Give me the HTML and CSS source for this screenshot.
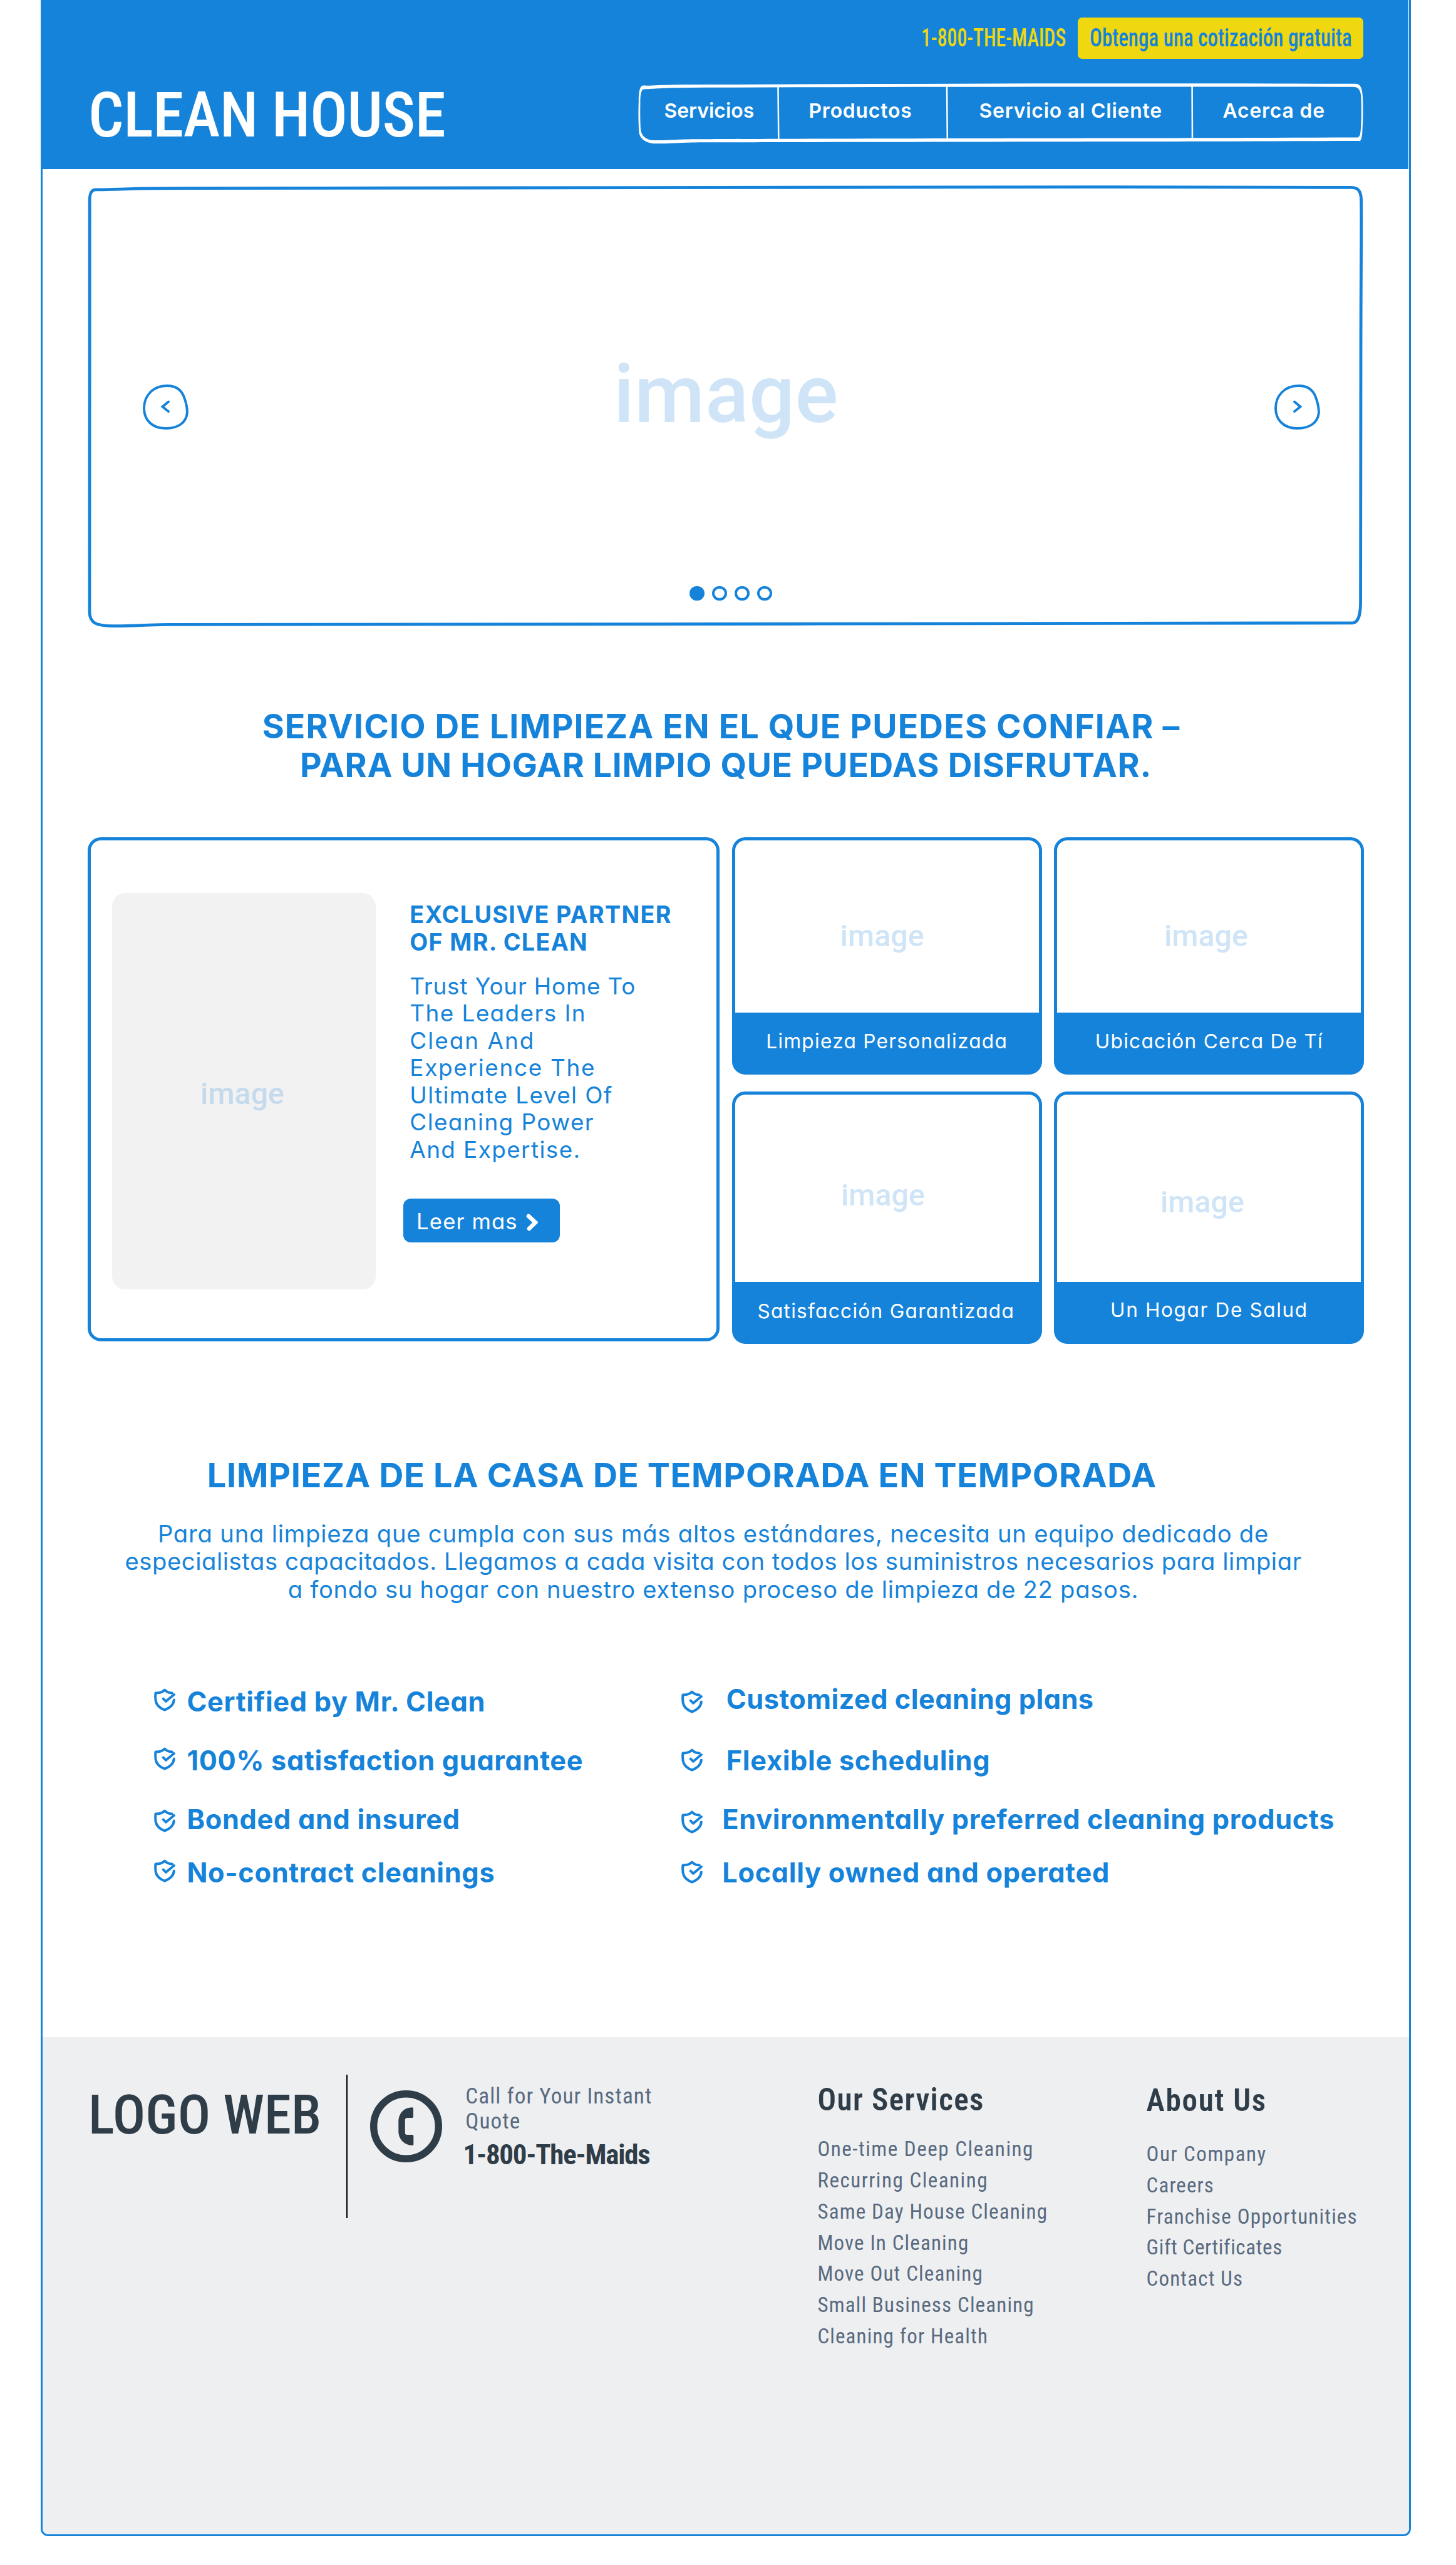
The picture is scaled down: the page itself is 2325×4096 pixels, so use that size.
FILE: index.html
```html
<!DOCTYPE html>
<html lang="es">
<head>
<meta charset="utf-8">
<title>Clean House</title>
<link rel="stylesheet" href="styles.css">
</head>
<body>
<svg class="defs" aria-hidden="true">
  <symbol id="shield" viewBox="0 0 34 37">
    <path d="M28.8 7.4C23 7.6 20 5.8 17 2.6C14 5.8 9 7.6 2.5 7.4C1.2 20 2.4 29 17 34.6C27 30.5 31.4 25 31.8 18.6"/>
    <path d="M14.8 16.6l4.2 4.2L31.9 10"/>
  </symbol>
</svg>
<div class="page">
  <header class="header">
    <h1 class="logo">CLEAN HOUSE</h1>
    <div class="header-side">
      <div class="contact">
        <span class="phone">1-800-THE-MAIDS</span>
        <a class="quote"><span class="quote-text">Obtenga una cotización gratuita</span></a>
      </div>
      <nav class="nav">
        <svg class="nav-frame" viewBox="0 0 1158 97">
          <path fill-rule="evenodd" d="M.8 30C.8 12 3 3.8 8 3.6C24 4 34 2.6 60 2.2C400 .6 800-.2 1146 .8C1153 .8 1156.5 8 1157 22C1158 45 1157.4 60 1156.6 72C1156.4 84 1155 92 1152 92C800 93.2 300 93.8 90 94.4C60 94.8 50 96.6 28 96.2C14 96.2 2 90 1.2 76C.4 60 .2 46 .8 30ZM3.4 32C3.2 20 4.6 9.6 9 9.4C24 9 34 7.6 60 7.2C400 5.4 800 5.2 1140 5.8C1150 5 1153.6 10 1154.4 22C1155.4 45 1154.8 60 1153.8 74C1153.4 82 1152 87 1147 86.6C800 87.6 300 88.4 90 89.2C60 89.6 50 91 28 91C12 91.4 4 84 3.8 70C3.2 56 3.2 44 3.4 32Z"/>
          <path class="divider" d="M223.5 6l.8 84M493 5l.8 84M884.6 4l.4 84"/>
        </svg>
        <a class="nav-item">Servicios</a>
        <a class="nav-item">Productos</a>
        <a class="nav-item">Servicio al Cliente</a>
        <a class="nav-item">Acerca de</a>
      </nav>
    </div>
  </header>

  <section class="hero">
    <svg class="hero-frame" viewBox="0 0 2037 706">
      <path d="M3.2 25C3 12 6 7.5 12 6.8C40 7.2 60 5 110 4.8C700 3 1300 2.4 1600 2.6C1800 2.4 1900 3.4 2016 3.4C2028 3 2033 8 2033.6 22C2034.6 60 2033 120 2033 300L2032.6 660C2033 684 2030 698 2020 698.8C1500 700 500 701 130 701.4C80 702 70 704 40 703.6C12 703.4 3.6 698 3 682C2.4 560 3 300 3.2 25Z"/>
    </svg>
    <div class="slide">
      <svg class="arrow" viewBox="0 0 73 72"><path d="M39 2C53 2 61 8 65.5 19C69 28 71.3 37 70.8 46C69 62 55 70 37 70C14 70 2 56 2 38C2 18 16 2 39 2Z"/><path d="M41 27.5L31.5 35.5L41 43"/></svg>
      <span class="placeholder placeholder-big">image</span>
      <svg class="arrow arrow-next" viewBox="0 0 73 72"><path d="M39 2C53 2 61 8 65.5 19C69 28 71.3 37 70.8 46C69 62 55 70 37 70C14 70 2 56 2 38C2 18 16 2 39 2Z"/><path d="M32 27.5L41.5 35.5L32 43"/></svg>
    </div>
    <div class="dots"><i class="dot dot-on"></i><i class="dot"></i><i class="dot"></i><i class="dot"></i></div>
  </section>

  <h2 class="headline">
    <span class="headline-first">SERVICIO DE LIMPIEZA EN EL QUE PUEDES CONFIAR –</span>
    <span>PARA UN HOGAR LIMPIO QUE PUEDAS DISFRUTAR.</span>
  </h2>

  <section class="services">
    <article class="partner">
      <div class="partner-pic"><span class="placeholder">image</span></div>
      <div class="partner-body">
        <h3 class="partner-title">EXCLUSIVE PARTNER<br>OF MR. CLEAN</h3>
        <p class="partner-text">
          <span class="tight">Trust Your Home To</span>
          <span>The Leaders In</span>
          <span class="wide">Clean And</span>
          <span class="medium">Experience The</span>
          <span>Ultimate Level Of</span>
          <span>Cleaning Power</span>
          <span>And Expertise.</span>
        </p>
        <a class="more">Leer mas
          <svg class="more-icon" viewBox="0 0 19 28"><path d="M4 4L15 14L5 24"/></svg>
        </a>
      </div>
    </article>
    <div class="cards">
      <article class="card"><div class="card-pic"><span class="placeholder">image</span></div><p class="card-name">Limpieza Personalizada</p></article>
      <article class="card"><div class="card-pic"><span class="placeholder">image</span></div><p class="card-name">Ubicación Cerca De Tí</p></article>
      <article class="card"><div class="card-pic"><span class="placeholder">image</span></div><p class="card-name">Satisfacción Garantizada</p></article>
      <article class="card"><div class="card-pic"><span class="placeholder">image</span></div><p class="card-name">Un Hogar De Salud</p></article>
    </div>
  </section>

  <section class="seasons">
    <h2 class="seasons-title">LIMPIEZA DE LA CASA DE TEMPORADA EN TEMPORADA</h2>
    <p class="seasons-text">
      <span>Para una limpieza que cumpla con sus más altos estándares, necesita un equipo dedicado de</span>
      <span>especialistas capacitados. Llegamos a cada visita con todos los suministros necesarios para limpiar</span>
      <span>a fondo su hogar con nuestro extenso proceso de limpieza de 22 pasos.</span>
    </p>
    <div class="perks">
      <ul class="perk-list">
        <li class="perk"><svg class="shield"><use href="#shield"/></svg>Certified by Mr. Clean</li>
        <li class="perk"><svg class="shield"><use href="#shield"/></svg>100% satisfaction guarantee</li>
        <li class="perk"><svg class="shield"><use href="#shield"/></svg>Bonded and insured</li>
        <li class="perk"><svg class="shield"><use href="#shield"/></svg>No-contract cleanings</li>
      </ul>
      <ul class="perk-list perk-list-right">
        <li class="perk"><svg class="shield"><use href="#shield"/></svg>Customized cleaning plans</li>
        <li class="perk"><svg class="shield"><use href="#shield"/></svg>Flexible scheduling</li>
        <li class="perk"><svg class="shield"><use href="#shield"/></svg>Environmentally preferred cleaning products</li>
        <li class="perk"><svg class="shield"><use href="#shield"/></svg>Locally owned and operated</li>
      </ul>
    </div>
  </section>

  <footer class="footer">
    <div class="footer-logo">LOGO WEB</div>
    <div class="call">
      <svg class="call-icon" viewBox="0 0 115 115"><circle cx="57.5" cy="57.5" r="51.8"/><path d="M65 27.4Q69 27 69 28.5V42Q69 43.9 67.5 43.9H59Q55.8 44 55.8 48V68Q55.8 71 59 71H67.5Q69.3 71 69.3 73V86.5Q69.3 88 67 88C53 87 45.5 77 45.3 66V50C45.3 38 53 28 65 27.4Z"/></svg>
      <div class="call-body">
        <p class="call-text">Call for Your Instant<br>Quote</p>
        <p class="call-number">1-800-The-Maids</p>
      </div>
    </div>
    <div class="links links-services">
      <h4 class="links-title">Our Services</h4>
      <ul class="links-list">
        <li>One-time Deep Cleaning</li>
        <li>Recurring Cleaning</li>
        <li>Same Day House Cleaning</li>
        <li>Move In Cleaning</li>
        <li>Move Out Cleaning</li>
        <li>Small Business Cleaning</li>
        <li>Cleaning for Health</li>
      </ul>
    </div>
    <div class="links links-about">
      <h4 class="links-title">About Us</h4>
      <ul class="links-list">
        <li>Our Company</li>
        <li>Careers</li>
        <li>Franchise Opportunities</li>
        <li class="tight-link">Gift Certificates</li>
        <li>Contact Us</li>
      </ul>
    </div>
  </footer>
</div>
</body>
</html>
```
FILE: styles.css
```css
:root {
  --blue: #1683da;
  --yellow: #efd80f;
  --ink: #2f3d49;
  --slate: #596a7f;
  --round: Inter, "Open Sans", sans-serif;
  --din: "Roboto Condensed", Roboto, sans-serif;
}

* { box-sizing: border-box; }

body {
  margin: 0;
  height: 4096px;
  background: #fff;
  color: var(--blue);
  font-family: var(--round);
  font-feature-settings: "cv11", "calt" 0;
}

h1, h2, h3, h4, p, ul { margin: 0; padding: 0; font-size: inherit; }
ul { list-style: none; }
a, span, h1, h4, li { white-space: nowrap; }

.defs { display: none; }

.page {
  width: 2188px;
  height: 4050px;
  margin-left: 65px;
  border: solid var(--blue);
  border-width: 0 3px 3px;
  border-radius: 0 0 12px 12px;
  display: flex;
  flex-direction: column;
}

/* Header */
.header {
  height: 270px;
  margin-right: 1px;
  padding: 0 72.5px 0 73px;
  background: var(--blue);
  color: #fff;
  display: flex;
  justify-content: space-between;
  align-items: flex-start;
  flex: none;
}

.logo {
  margin-top: 134px;
  font: 500 99.6px/100px var(--din);
  letter-spacing: -.5px;
}

.header-side {
  display: flex;
  flex-direction: column;
  align-items: flex-end;
}

.contact {
  margin-top: 27.6px;
  display: flex;
  gap: 20px;
  font: 500 40.2px/66px var(--din);
}

.phone {
  width: 230px;
  color: var(--yellow);
  transform: scaleX(.79);
  transform-origin: left;
}

.quote {
  width: 456px;
  height: 66.4px;
  padding-left: 19px;
  border-radius: 7px;
  background: var(--yellow);
  color: var(--blue);
}

.quote-text {
  display: block;
  transform: scaleX(.822);
  transform-origin: left;
}

.nav {
  position: relative;
  width: 1158px;
  height: 97px;
  margin-top: 39.2px;
  padding-top: 28px;
  display: grid;
  grid-template-columns: 224px 269px 392px 273px;
  font: 600 31.9px/32px var(--round);
  letter-spacing: .8px;
}

.nav-frame {
  position: absolute;
  inset: 0;
  fill: #fff;
}

.divider { stroke: #fff; stroke-width: 2.5; }

.nav-item { padding-left: 49px; }
.nav-item:first-of-type { padding-left: 42px; letter-spacing: 0; }
.nav-item:nth-of-type(3) { padding-left: 52px; }

/* Carousel */
.hero {
  position: relative;
  flex: none;
  width: 2037px;
  height: 706px;
  margin: 25.8px 0 0 72.4px;
  padding: 318px 69px 0 87.3px;
}

.hero-frame {
  position: absolute;
  inset: 0;
  fill: none;
  stroke: var(--blue);
  stroke-width: 4.8;
}

.slide {
  height: 72px;
  display: flex;
  align-items: flex-start;
}

.arrow {
  width: 73px;
  height: 72px;
  fill: none;
  stroke: var(--blue);
  stroke-width: 3.9;
  stroke-linecap: round;
}

.arrow-next { margin-left: auto; }

.placeholder {
  font: 500 48.4px/50px Roboto, sans-serif;
  letter-spacing: 0;
  opacity: .2;
}

.placeholder-big {
  font-size: 129px;
  line-height: 130px;
  letter-spacing: .5px;
  margin: -48.5px 0 0 679px;
}

.dots {
  display: flex;
  gap: 12.4px;
  margin: 250px 0 0 873.3px;
}

.dot {
  width: 23.6px;
  height: 23.6px;
  border: 4.5px solid var(--blue);
  border-radius: 50%;
}

.dot-on { background: var(--blue); }

/* Headline */
.headline {
  flex: none;
  margin-top: 127px;
  font-weight: 700;
  font-size: 53.6px;
  line-height: 62.2px;
  letter-spacing: .65px;
  text-align: center;
}

.headline span { display: block; }
.headline .headline-first { padding-right: 15px; letter-spacing: 1.15px; }

/* Services */
.services {
  flex: none;
  margin: 83.5px 0 0 71.8px;
  display: flex;
  gap: 19.7px;
}

.partner {
  width: 1009.3px;
  height: 805.7px;
  border: 5px solid var(--blue);
  border-radius: 21px;
  padding: 84.1px 0 0 34.7px;
  display: flex;
}

.partner-pic {
  width: 420.5px;
  height: 633.4px;
  border-radius: 21px;
  background: #f2f2f2;
  display: flex;
  padding: 296px 0 0 140.6px;
}

.partner-body { margin: 13.3px 0 0 54.3px; }

.partner-title {
  font-weight: 700;
  font-size: 37.7px;
  line-height: 43.6px;
  letter-spacing: 1.3px;
}

.partner-text {
  margin-top: 26.3px;
  font-size: 36.9px;
  line-height: 43.55px;
  letter-spacing: 1.4px;
}

.partner-text span { display: block; }
.partner-text .tight { letter-spacing: .8px; }
.partner-text .medium { letter-spacing: 1.7px; }
.partner-text .wide { letter-spacing: 2px; }

.more {
  width: 250px;
  height: 70.5px;
  margin: 56.5px 0 0 -10.2px;
  padding: 2px 35px 0 21px;
  border-radius: 12px;
  background: var(--blue);
  color: #fff;
  font-size: 34.7px;
  letter-spacing: 1.1px;
  display: flex;
  align-items: center;
  justify-content: space-between;
}

.more-icon {
  width: 19px;
  height: 28px;
  margin-top: 4px;
  fill: none;
  stroke: #fff;
  stroke-width: 6.6;
  stroke-linecap: round;
}

.cards {
  display: grid;
  grid-template-columns: 494.9px 494.9px;
  grid-template-rows: 379.1px 403.1px;
  gap: 26.8px 19.8px;
}

.card {
  border: 5px solid var(--blue);
  border-radius: 21px;
  background: var(--blue);
  display: flex;
  flex-direction: column;
}

.card-pic {
  flex: 1;
  border-radius: 16px 16px 0 0;
  background: #fff;
  padding: 127.9px 0 0 168px;
}

.card-pic .placeholder { display: block; }
.card:nth-child(2) .card-pic { padding-left: 170.5px; }
.card:nth-child(3) .card-pic { padding: 136.7px 0 0 169.2px; }
.card:nth-child(4) .card-pic { padding: 147.1px 0 0 164.5px; }

.card-name {
  height: 94px;
  padding-top: 29.8px;
  color: #fff;
  font-size: 31.6px;
  line-height: 32px;
  letter-spacing: 1.28px;
  text-align: center;
}

.card:nth-child(3) .card-name { padding: 31.3px 3px 0 0; }
.card:nth-child(4) .card-name { letter-spacing: 1.6px; }

/* Seasons */
.seasons { flex: none; }

.seasons-title {
  margin: 178.2px 0 0 262.8px;
  font-weight: 700;
  font-size: 54.2px;
  line-height: 62px;
  letter-spacing: .62px;
}

.seasons-text {
  margin: 40.9px 40px 0 0;
  font-size: 38.2px;
  line-height: 44.6px;
  letter-spacing: .57px;
  text-align: center;
}

.seasons-text span { display: block; }
.seasons-text span:first-child { letter-spacing: .79px; }
.seasons-text span:last-child { letter-spacing: .71px; }

.perks {
  margin: 134.6px 0 0 178.4px;
  display: grid;
  grid-template-columns: 841.9px auto;
}

.perk-list {
  display: grid;
  grid-template-rows: 94.3px 93.4px 85.4px 44px;
}

.perk {
  display: flex;
  gap: 18px;
  font-weight: 700;
  font-size: 43.3px;
  line-height: 44px;
  letter-spacing: .68px;
}

.shield {
  width: 34px;
  height: 37px;
  margin-top: 1px;
  overflow: visible;
  fill: none;
  stroke: var(--blue);
  stroke-width: 4;
  stroke-linecap: round;
  stroke-linejoin: round;
}

.perk:nth-child(3) .shield { margin-top: 6px; }

.perk-list-right { margin-top: -4.1px; grid-template-rows: 98.4px 93.4px 85.4px 44px; }
.perk-list-right .perk { gap: 31px; }
.perk-list-right .perk:nth-child(1) { gap: 37.5px; letter-spacing: .48px; }
.perk-list-right .perk:nth-child(2) { gap: 37.5px; }
.perk-list-right .perk:nth-child(1) .shield { margin-top: 7.6px; }
.perk-list-right .perk:nth-child(2) .shield { margin-top: 2.5px; }
.perk-list-right .perk:nth-child(3) .shield { margin-top: 8.3px; }
.perk-list-right .perk:nth-child(4) .shield { margin-top: 2.7px; }

/* Footer */
.footer {
  flex: 1;
  margin-top: 241.1px;
  padding: 59.3px 0 0 73px;
  border-radius: 0 0 9px 9px;
  background: #eeeff1;
  color: var(--ink);
  font-family: var(--din);
  display: flex;
  align-items: flex-start;
}

.footer-logo {
  width: 413.8px;
  height: 229.7px;
  padding-top: 19.9px;
  border-right: 2px solid #000;
  font-weight: 500;
  font-size: 87.2px;
  line-height: 88px;
}

.call { display: flex; margin: 14.2px 0 0 36.4px; width: 714.2px; }

.call-icon {
  width: 115px;
  height: 115px;
  margin-top: 11.1px;
  fill: none;
  stroke: var(--ink);
  stroke-width: 11.4;
}

.call-icon path { fill: var(--ink); stroke: none; }

.call-body { margin-left: 37.1px; }

.call-text {
  color: var(--slate);
  font-size: 35.2px;
  line-height: 40.2px;
  letter-spacing: 1.05px;
}

.call-number {
  margin: 11.2px 0 0 -3.8px;
  font-weight: 700;
  font-size: 44.9px;
  line-height: 46px;
  letter-spacing: -1.23px;
}

.links-services { margin-top: 15.7px; width: 525.2px; }
.links-about { margin-top: 16.8px; }

.links-title {
  font-weight: 600;
  font-size: 49.2px;
  line-height: 50px;
  letter-spacing: 1.4px;
}

.links-list {
  margin-top: 29.1px;
  color: var(--slate);
  font-size: 33.1px;
  line-height: 49.76px;
  letter-spacing: 1.13px;
}

.links-services li:nth-child(-n+2) { letter-spacing: 1.5px; }
.links-about .links-title { letter-spacing: 1.7px; }
.links-about .links-list { margin-top: 35.6px; }
.links-about li:first-child { letter-spacing: 1.5px; }
.links-about .tight-link { letter-spacing: .6px; }
```
